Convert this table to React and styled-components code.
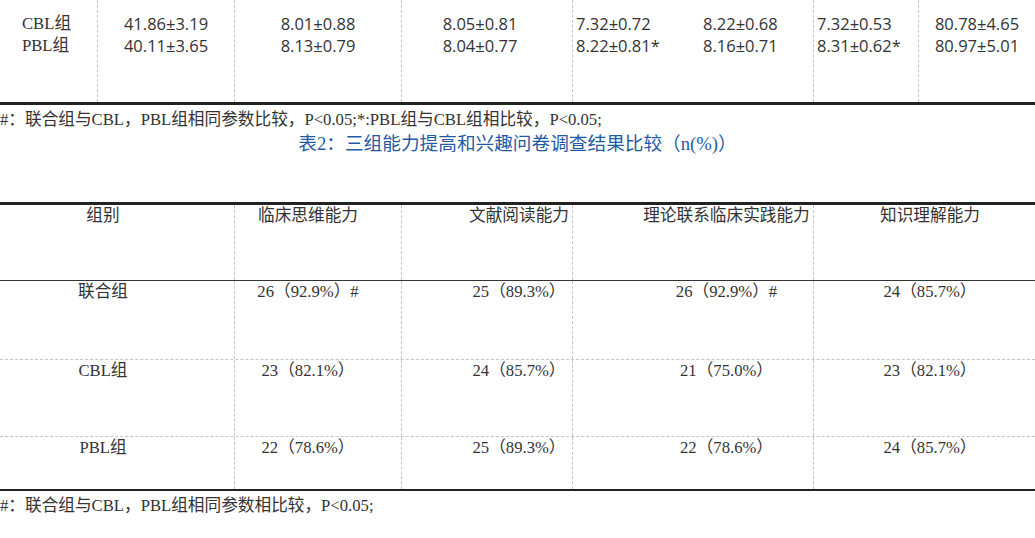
import React from "react";
import styled, { createGlobalStyle } from "styled-components";

const Global = createGlobalStyle`
  html, body { margin: 0; padding: 0; background: #fff; }
  body {
    font-family: "Liberation Serif", "Noto Sans CJK SC", serif;
    font-size: 16.67px;
    color: #333;
    overflow: hidden;
  }
`;

const Page = styled.div`
  width: 1035px;
  height: 538px;
  overflow: hidden;
`;

const TopTable = styled.div`
  display: grid;
  grid-template-columns: 98px 137px 167px 171px 117px 124px 105px 116px;
  height: 102px;
  border-bottom: 3px solid #222;
`;

const TopCell = styled.div`
  padding-top: 13px;
  line-height: 22px;
  text-align: ${(p) => p.$align || "center"};
  padding-left: ${(p) => p.$pl || 0}px;
  padding-right: ${(p) => p.$pr || 0}px;
  border-right: ${(p) => (p.$noLine ? "none" : "1px dashed #c4c4c4")};
  white-space: nowrap;
`;

const Num = styled.div`
  font-family: "Open Sans", "Noto Sans CJK SC", sans-serif;
  font-size: 16.5px;
`;

const Note = styled.div`
  line-height: 22px;
  white-space: nowrap;
  margin-top: ${(p) => p.$mt || 0}px;
`;

const Title = styled.div`
  line-height: 22px;
  margin-top: 2px;
  font-size: 18.67px;
  text-align: center;
  color: #1f5aa6;
  white-space: nowrap;
`;

const Table = styled.div`
  margin-top: 47px;
  border-top: 3px solid #222;
  border-bottom: 2px solid #222;
`;

const Row = styled.div`
  display: grid;
  grid-template-columns: 235px 167px 171px 241px 221px;
  height: ${(p) => p.$h}px;
  border-bottom: ${(p) => p.$border || "none"};
`;

const Cell = styled.div`
  line-height: 22px;
  text-align: center;
  white-space: nowrap;
  padding-left: ${(p) => p.$pl || 0}px;
  padding-right: ${(p) => p.$pr || 0}px;
  border-right: ${(p) => (p.$last ? "none" : "1px dashed #c4c4c4")};
`;

const topCols = [
  { align: "left", pl: 22, lines: ["CBL组", "PBL组"], serif: true },
  { lines: ["41.86±3.19", "40.11±3.65"] },
  { lines: ["8.01±0.88", "8.13±0.79"] },
  { pr: 14, lines: ["8.05±0.81", "8.04±0.77"] },
  { align: "left", pl: 3, noLine: true, lines: ["7.32±0.72", "8.22±0.81*"] },
  { align: "left", pl: 13, lines: ["8.22±0.68", "8.16±0.71"] },
  { align: "left", pl: 3, lines: ["7.32±0.53", "8.31±0.62*"] },
  { lines: ["80.78±4.65", "80.97±5.01"] },
];

const colPad = [
  { pr: 28 },
  { pr: 20 },
  { pl: 64 },
  { pl: 67 },
  { pl: 11 },
];

const header = ["组别", "临床思维能力", "文献阅读能力", "理论联系临床实践能力", "知识理解能力"];
const rows = [
  { h: 78, border: "1px dashed #c4c4c4", cells: ["联合组", "26（92.9%）#", "25（89.3%）", "26（92.9%）#", "24（85.7%）"] },
  { h: 76, border: "1px dashed #c4c4c4", cells: ["CBL组", "23（82.1%）", "24（85.7%）", "21（75.0%）", "23（82.1%）"] },
  { h: 52, border: "none", cells: ["PBL组", "22（78.6%）", "25（89.3%）", "22（78.6%）", "24（85.7%）"] },
];

export default function App() {
  return (
    <Page>
      <Global />
      <TopTable>
        {topCols.map((c, i) => (
          <TopCell key={i} $align={c.align} $pl={c.pl} $pr={c.pr} $noLine={c.noLine || i === topCols.length - 1}>
            {c.lines.map((l, j) =>
              c.serif ? <div key={j}>{l}</div> : <Num key={j}>{l}</Num>
            )}
          </TopCell>
        ))}
      </TopTable>
      <Note $mt={4}>#：联合组与CBL，PBL组相同参数比较，P&lt;0.05;*:PBL组与CBL组相比较，P&lt;0.05;</Note>
      <Title>表2：三组能力提高和兴趣问卷调查结果比较（n(%)）</Title>
      <Table>
        <Row $h={75} $border="1px solid #333">
          {header.map((t, i) => (
            <Cell key={i} $pl={colPad[i].pl} $pr={colPad[i].pr} $last={i === 4}>{t}</Cell>
          ))}
        </Row>
        {rows.map((r, ri) => (
          <Row key={ri} $h={r.h} $border={r.border}>
            {r.cells.map((t, i) => (
              <Cell key={i} $pl={colPad[i].pl} $pr={colPad[i].pr} $last={i === 4}>{t}</Cell>
            ))}
          </Row>
        ))}
      </Table>
      <Note $mt={4}>#：联合组与CBL，PBL组相同参数相比较，P&lt;0.05;</Note>
    </Page>
  );
}
